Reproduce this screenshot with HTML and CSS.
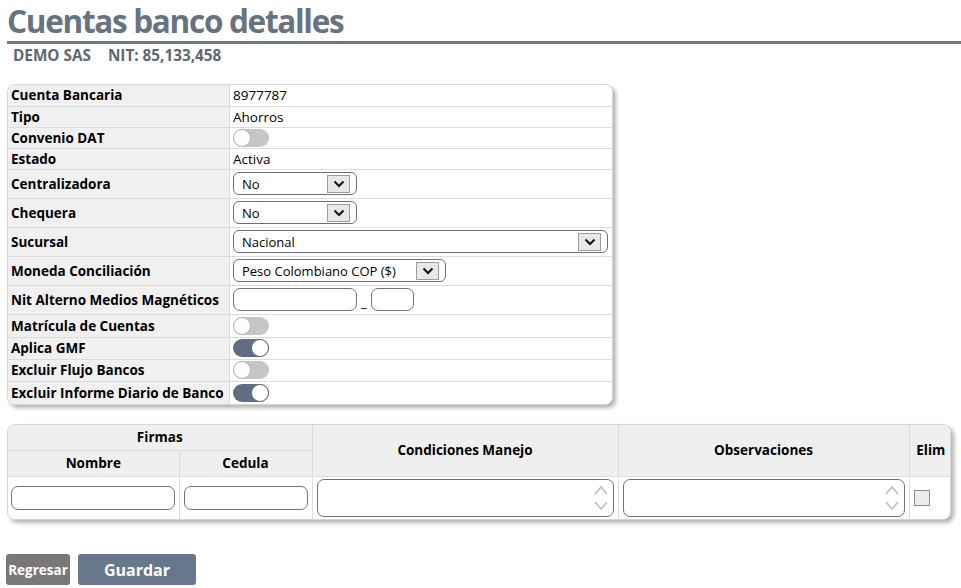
FILE: index.html
```html
<!DOCTYPE html>
<html lang="es">
<head>
<meta charset="utf-8">
<title>Cuentas banco detalles</title>
<link rel="stylesheet" href="styles.css">
</head>
<body>
<div class="page">
  <h1 class="title">Cuentas banco detalles</h1>
  <div class="subtitle"><span>DEMO SAS</span><span>NIT: 85,133,458</span></div>

  <div class="card card-detail">
    <table class="grid detail">
      <tr class="r-text"><th>Cuenta Bancaria</th><td>8977787</td></tr>
      <tr class="r-text"><th>Tipo</th><td>Ahorros</td></tr>
      <tr class="r-text"><th>Convenio DAT</th><td><div class="toggle"><span class="knob"></span></div></td></tr>
      <tr class="r-text"><th>Estado</th><td>Activa</td></tr>
      <tr class="r-sel"><th>Centralizadora</th><td><div class="select w-sm"><span>No</span><span class="arrow"><svg width="12" height="8" viewBox="0 0 12 8"><path d="M1.5 1.5 L6 6 L10.5 1.5" fill="none" stroke="#111" stroke-width="2"/></svg></span></div></td></tr>
      <tr class="r-sel"><th>Chequera</th><td><div class="select w-sm"><span>No</span><span class="arrow"><svg width="12" height="8" viewBox="0 0 12 8"><path d="M1.5 1.5 L6 6 L10.5 1.5" fill="none" stroke="#111" stroke-width="2"/></svg></span></div></td></tr>
      <tr class="r-sel"><th>Sucursal</th><td><div class="select w-lg"><span>Nacional</span><span class="arrow"><svg width="12" height="8" viewBox="0 0 12 8"><path d="M1.5 1.5 L6 6 L10.5 1.5" fill="none" stroke="#111" stroke-width="2"/></svg></span></div></td></tr>
      <tr class="r-sel"><th>Moneda Conciliación</th><td><div class="select w-md"><span>Peso Colombiano COP ($)</span><span class="arrow"><svg width="12" height="8" viewBox="0 0 12 8"><path d="M1.5 1.5 L6 6 L10.5 1.5" fill="none" stroke="#111" stroke-width="2"/></svg></span></div></td></tr>
      <tr class="r-sel"><th>Nit Alterno Medios Magnéticos</th><td><div class="nit"><input class="field nit-main" type="text"><span class="sep">_</span><input class="field nit-dv" type="text"></div></td></tr>
      <tr class="r-tog1"><th>Matrícula de Cuentas</th><td><div class="toggle"><span class="knob"></span></div></td></tr>
      <tr class="r-tog"><th>Aplica GMF</th><td><div class="toggle on"><span class="knob"></span></div></td></tr>
      <tr class="r-tog"><th>Excluir Flujo Bancos</th><td><div class="toggle"><span class="knob"></span></div></td></tr>
      <tr class="r-tog1"><th>Excluir Informe Diario de Banco</th><td><div class="toggle on"><span class="knob"></span></div></td></tr>
    </table>
  </div>

  <div class="card card-firmas">
    <table class="grid firmas">
      <colgroup>
        <col class="c-nombre"><col class="c-cedula"><col class="c-cond"><col class="c-obs"><col class="c-elim">
      </colgroup>
      <tr class="h1"><th colspan="2">Firmas</th><th rowspan="2">Condiciones Manejo</th><th rowspan="2">Observaciones</th><th rowspan="2">Elim</th></tr>
      <tr class="h2"><th>Nombre</th><th>Cedula</th></tr>
      <tr class="body-row">
        <td><input class="field cell-input" type="text"></td>
        <td><input class="field cell-input" type="text"></td>
        <td><div class="area"><svg width="16" height="32" viewBox="0 0 16 32"><path d="M2 12 L8 5 L14 12 M2 20 L8 27 L14 20" fill="none" stroke="#bdbdbd" stroke-width="1.6"/></svg></div></td>
        <td><div class="area"><svg width="16" height="32" viewBox="0 0 16 32"><path d="M2 12 L8 5 L14 12 M2 20 L8 27 L14 20" fill="none" stroke="#bdbdbd" stroke-width="1.6"/></svg></div></td>
        <td><input class="check" type="checkbox"></td>
      </tr>
    </table>
  </div>

  <div class="actions">
    <button class="btn btn-back" type="button">Regresar</button>
    <button class="btn btn-save" type="button">Guardar</button>
  </div>
</div>
</body>
</html>
```
FILE: styles.css
```css
html, body {
  margin: 0;
  background: #fff;
}

body {
  font-family: "Open Sans", "Liberation Sans", sans-serif;
  color: #000;
}

.page {
  padding: 0 0 0 7px;
}

.title {
  margin: 0;
  padding: 3px 0 2px;
  font-size: 31.5px;
  line-height: 36px;
  font-weight: 700;
  color: #67737f;
  letter-spacing: -1.3px;
  border-bottom: 3px solid #6d7885;
}

.subtitle {
  margin: 2px 0 0 6px;
  display: flex;
  gap: 17px;
  font-size: 15.3px;
  line-height: 18px;
  font-weight: 700;
  color: #5c6874;
}

.card {
  box-sizing: border-box;
  border: 1px solid #d6d6d6;
  border-radius: 8px;
  box-shadow: 3px 3px 4px rgba(0, 0, 0, 0.3);
  overflow: hidden;
  background: #fff;
}

.card-detail {
  width: 606px;
  margin-top: 20px;
}

.card-firmas {
  width: 944px;
  margin-top: 19px;
}

.grid {
  width: 100%;
  border-collapse: collapse;
  border-style: hidden;
}

.grid th,
.grid td {
  border: 1px solid #dcdcdc;
  font-size: 13.5px;
  line-height: 18px;
}

.detail th {
  width: 215px;
  padding: 0 3px;
  text-align: left;
  font-weight: 700;
  background: #f0f0f0;
  white-space: nowrap;
}

.detail td {
  padding: 0 3px;
  background: #fff;
}

.r-text { height: 21px; }
.r-sel { height: 29px; }
.r-tog { height: 22px; }
.r-tog1 { height: 23px; }

.toggle {
  width: 36px;
  height: 18px;
  border-radius: 9px;
  background: #c6c6c6;
  display: flex;
  justify-content: flex-start;
}

.toggle .knob {
  box-sizing: border-box;
  width: 18px;
  height: 18px;
  border-radius: 50%;
  background: #fff;
  border: 1px solid #b3b3b3;
}

.toggle.on {
  background: #5f6e82;
  justify-content: flex-end;
}

.toggle.on .knob {
  border-color: #5f6e82;
}

.select {
  box-sizing: border-box;
  height: 23px;
  display: flex;
  align-items: center;
  justify-content: space-between;
  padding: 0 6px 0 8px;
  border: 1px solid #6f6f6f;
  border-radius: 6px;
  font-size: 13px;
  background: #fff;
}

.select .arrow {
  box-sizing: border-box;
  width: 23px;
  height: 18px;
  display: flex;
  align-items: center;
  justify-content: center;
  border: 1px solid #9c9c9c;
  background: #e8e8e8;
}

.w-sm { width: 124px; }
.w-md { width: 213px; }
.w-lg { width: 375px; }

.field {
  box-sizing: border-box;
  margin: 0;
  border: 1px solid #747474;
  border-radius: 7px;
  background: #fff;
  font-family: inherit;
  font-size: 13px;
}

.nit {
  display: flex;
  align-items: flex-end;
  gap: 4px;
}

.nit-main { width: 124px; height: 23px; }
.nit-dv { width: 43px; height: 23px; }

.sep {
  font-size: 13px;
  line-height: 18px;
}

.firmas .c-nombre { width: 171px; }
.firmas .c-cedula { width: 133px; }
.firmas .c-cond { width: 306px; }
.firmas .c-obs { width: 291px; }
.firmas .c-elim { width: 43px; }

.firmas {
  table-layout: fixed;
}

.firmas th {
  background: #efefef;
  font-weight: 700;
  text-align: center;
  padding: 0;
}

.firmas .h1 { height: 25px; }
.firmas .h2 { height: 26px; }
.firmas .body-row { height: 43px; }

.firmas td {
  padding: 0 4px;
}

.firmas td:first-child {
  padding-left: 3px;
}

.cell-input {
  width: 100%;
  height: 24px;
  display: block;
}

.area {
  box-sizing: border-box;
  height: 38px;
  display: flex;
  align-items: center;
  justify-content: flex-end;
  padding-right: 4px;
  border: 1px solid #747474;
  border-radius: 7px;
  background: #fff;
}

.check {
  appearance: none;
  -webkit-appearance: none;
  display: block;
  margin: 0;
  width: 16px;
  height: 16px;
  border: 1px solid #8c8c8c;
  background: #ececec;
}

.actions {
  margin: 34px 0 0 -1px;
  display: flex;
  gap: 8px;
}

.btn {
  height: 31px;
  border: none;
  border-radius: 3px;
  color: #fff;
  font-family: inherit;
  font-weight: 700;
  padding: 0;
}

.btn-back {
  width: 64px;
  background: #787878;
  font-size: 13.5px;
}

.btn-save {
  width: 118px;
  background: #66788a;
  font-size: 16px;
}
```
